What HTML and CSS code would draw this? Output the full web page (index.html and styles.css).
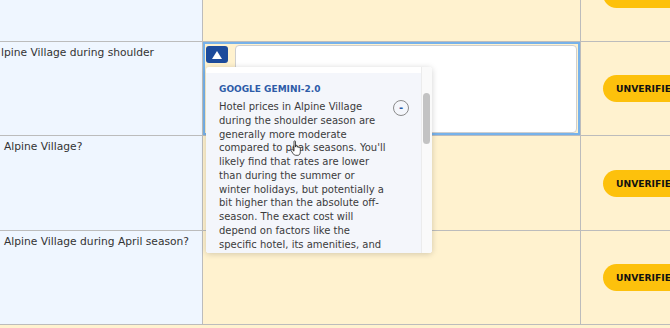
FILE: index.html
```html
<!DOCTYPE html>
<html lang="en">
<head>
    <meta charset="UTF-8">
    <title>Answer review</title>
    <link rel="stylesheet" href="styles.css">
</head>
<body>
    <div class="sheet">
        <div class="row">
            <div class="cell question"></div>
            <div class="cell answer"></div>
            <div class="cell status"><span class="pill">Unverified</span></div>
        </div>

        <div class="row">
            <div class="cell question"><span class="clipped">lpine Village during shoulder</span></div>
            <div class="cell answer active">
                <div class="editor">
                    <button class="toggle" type="button">
                        <svg width="10" height="8" viewBox="0 0 10 8"><polygon points="5,0 10,8 0,8" fill="#fff"/></svg>
                    </button>
                    <textarea class="input"></textarea>
                </div>
                <!-- model answer preview -->
                <div class="popup">
                    <div class="popup-body">
                        <div class="card">
                            <div class="model">Google Gemini-2.0</div>
                            <div class="reply">
                                <p>Hotel prices in Alpine Village during the shoulder season are generally more moderate compared to peak seasons. You'll likely find that rates are lower than during the summer or winter holidays, but potentially a bit higher than the absolute off-season. The exact cost will depend on factors like the specific hotel, its amenities, and your exact travel dates during the shoulder season.</p>
                                <span class="collapse">-</span>
                            </div>
                        </div>
                    </div>
                    <div class="track"><div class="thumb"></div></div>
                </div>
                <svg class="cursor" width="12" height="16" viewBox="0 0 12 16">
                    <path d="M4,1.5 C4,0.6 5.5,0.6 5.5,1.5 L5.5,7 L5.8,7 L5.8,5.9 C5.8,5.1 7.3,5.1 7.3,5.9 L7.3,7.2 C7.3,6.4 8.8,6.4 8.8,7.2 L8.8,7.8 C8.8,7 10.3,7 10.3,7.8 L10.3,11.8 C10.3,13.8 9.4,15.3 7.9,15.3 L5.6,15.3 C4.6,15.3 3.9,14.7 3.3,13.9 L1.2,10.8 C0.6,9.8 1.8,9 2.6,9.8 L4,11.2 Z" fill="#fff" stroke="#222" stroke-width="0.8" stroke-linejoin="round"/>
                </svg>
            </div>
            <div class="cell status"><span class="pill">Unverified</span></div>
        </div>

        <div class="row tall">
            <div class="cell question">Alpine Village?</div>
            <div class="cell answer"></div>
            <div class="cell status"><span class="pill">Unverified</span></div>
        </div>

        <div class="row">
            <div class="cell question">Alpine Village during April season?</div>
            <div class="cell answer"></div>
            <div class="cell status"><span class="pill">Unverified</span></div>
        </div>
    </div>
</body>
</html>
```

FILE: styles.css
```css
* {
    box-sizing: border-box;
}
body {
    margin: 0;
    font-family: "DejaVu Sans", sans-serif;
    color: #333;
    overflow: hidden;
    background: #fff2cf;
}
.sheet {
    margin-top: -52px;
}
.row {
    display: grid;
    grid-template-columns: 203px 378px 120px;
    grid-template-rows: 94px;
    height: 94px;
}
.row.tall {
    grid-template-rows: 95px;
    height: 95px;
}
.cell {
    border-right: 1px solid #bcbcbc;
    border-bottom: 1px solid #bcbcbc;
    min-height: 0;
}
.question {
    background: #eff6ff;
    font-size: 10.7px;
    line-height: 14px;
    padding: 4px 4px 0;
}
.clipped {
    display: block;
    text-indent: -3px;
}
.answer {
    background: #fff2cf;
    position: relative;
}
.status {
    background: #fff2cf;
    display: flex;
    align-items: center;
    padding-left: 22px;
}
.pill {
    background: #fdc10c;
    color: #111;
    font-weight: bold;
    font-size: 9.2px;
    text-transform: uppercase;
    height: 27px;
    line-height: 27px;
    padding: 0 16px 0 13px;
    border-radius: 14px;
    white-space: nowrap;
}
.active {
    box-shadow: inset 0 0 0 2px #77b2ea;
    z-index: 2;
}
.editor {
    display: flex;
    gap: 7px;
    padding: 3px 3px 0 3px;
}
.toggle {
    margin-top: 1px;
    width: 22px;
    height: 17px;
    border: none;
    border-radius: 3px;
    background: #1d4b9b;
    padding: 0;
    display: flex;
    align-items: center;
    justify-content: center;
}
.input {
    flex: 1;
    height: 88px;
    border: 1px solid #cfcfcf;
    border-radius: 4px;
    background: #fff;
    resize: none;
    margin: 0;
}
.popup {
    position: absolute;
    left: 3px;
    top: 25px;
    width: 226px;
    height: 186px;
    display: flex;
    background: #fff;
    border-radius: 3px;
    box-shadow: 0 1px 6px rgba(0, 0, 0, 0.18);
    overflow: hidden;
}
.popup-body {
    flex: 1;
    padding-top: 6px;
    overflow: hidden;
}
.card {
    background: #f4f6fb;
    height: 100%;
    padding: 11px 12px 0 13px;
}
.model {
    color: #2d5ba8;
    font-weight: bold;
    font-size: 9px;
    text-transform: uppercase;
    margin-bottom: 6px;
}
.reply {
    display: flex;
    gap: 5px;
    align-items: flex-start;
}
.reply p {
    flex: none;
    margin: 0;
    width: 169px;
    font-size: 10px;
    line-height: 13.75px;
    color: #3b3b3b;
}
.collapse {
    flex: none;
    width: 16px;
    height: 16px;
    border: 1px solid #8a8a8a;
    border-radius: 50%;
    color: #2d5ba8;
    font-size: 10px;
    line-height: 13px;
    text-align: center;
    font-weight: bold;
}
.track {
    width: 11px;
    background: #fafafa;
    border-left: 1px solid #ececec;
    padding-top: 26px;
}
.thumb {
    width: 7px;
    height: 51px;
    margin-left: 1px;
    border-radius: 4px;
    background: #c3c3c3;
}
.cursor {
    position: absolute;
    left: 87px;
    top: 98px;
    z-index: 3;
}
```
